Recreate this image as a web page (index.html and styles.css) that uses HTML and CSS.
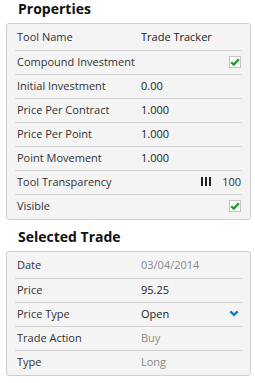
FILE: index.html
```html
<!DOCTYPE html>
<html lang="en">
<head>
    <meta charset="UTF-8">
    <title>Properties</title>
    <link rel="stylesheet" href="styles.css">
</head>
<body>
    <!-- Properties -->
    <h2 class="section-title">Properties</h2>
    <div class="panel">
        <div class="row">
            <span class="label">Tool Name</span>
            <span class="value">Trade Tracker</span>
        </div>
        <div class="row">
            <span class="label">Compound Investment</span>
            <span class="check"><svg viewBox="0 0 10 10" width="10" height="10"><path d="M1.2 5.2 L3.8 7.6 L8.8 2.2" fill="none" stroke="#1e9a1e" stroke-width="2.2"/></svg></span>
        </div>
        <div class="row">
            <span class="label">Initial Investment</span>
            <span class="value">0.00</span>
        </div>
        <div class="row">
            <span class="label">Price Per Contract</span>
            <span class="value">1.000</span>
        </div>
        <div class="row">
            <span class="label">Price Per Point</span>
            <span class="value">1.000</span>
        </div>
        <div class="row">
            <span class="label">Point Movement</span>
            <span class="value">1.000</span>
        </div>
        <div class="row">
            <span class="label">Tool Transparency</span>
            <span class="slider">
                <span class="grip"><i></i><i></i><i></i></span>
                <span class="slider-val">100</span>
            </span>
        </div>
        <div class="row">
            <span class="label">Visible</span>
            <span class="check"><svg viewBox="0 0 10 10" width="10" height="10"><path d="M1.2 5.2 L3.8 7.6 L8.8 2.2" fill="none" stroke="#1e9a1e" stroke-width="2.2"/></svg></span>
        </div>
    </div>

    <!-- Selected Trade -->
    <h2 class="section-title second">Selected Trade</h2>
    <div class="panel">
        <div class="row">
            <span class="label">Date</span>
            <span class="value muted">03/04/2014</span>
        </div>
        <div class="row">
            <span class="label">Price</span>
            <span class="value">95.25</span>
        </div>
        <div class="row">
            <span class="label">Price Type</span>
            <span class="value">Open</span>
            <span class="chevron"><svg viewBox="0 0 10 7" width="10" height="7"><path d="M1.3 1.3 L5 4.9 L8.7 1.3" fill="none" stroke="#1b7dc3" stroke-width="2.4"/></svg></span>
        </div>
        <div class="row">
            <span class="label">Trade Action</span>
            <span class="value muted">Buy</span>
        </div>
        <div class="row">
            <span class="label">Type</span>
            <span class="value muted">Long</span>
        </div>
    </div>
</body>
</html>
```

FILE: styles.css
```css
* {
    margin: 0;
    padding: 0;
    box-sizing: border-box;
}

body {
    font-family: 'Open Sans', 'DejaVu Sans', sans-serif;
    font-size: 11px;
    color: #333;
    background: #fff;
}

.section-title {
    font-size: 14px;
    font-weight: 700;
    color: #111;
    line-height: 17px;
    padding-left: 18px;
    margin-bottom: 6px;
}

.section-title.second {
    margin-top: 8px;
}

.panel {
    margin-left: 6px;
    width: 245px;
    background: #f4f4f4;
    border: 1px solid #cfcfcf;
    border-radius: 3px;
    padding: 3px 8px 1px;
}

.row {
    display: flex;
    align-items: center;
    height: 24px;
    border-bottom: 1px solid #d2d2d2;
    padding-left: 2px;
    padding-bottom: 2px;
}

.row:first-child {
    padding-bottom: 4px;
}

.row:last-child {
    height: 23px;
    border-bottom: none;
}

.label {
    width: 124px;
    flex-shrink: 0;
    color: #333;
}

.value {
    color: #222;
}

.value.muted {
    color: #8a8a8a;
}

.check {
    margin-left: auto;
    margin-right: 1px;
    width: 12px;
    height: 12px;
    background: #fff;
    border: 1px solid #c4c4c4;
    display: flex;
    align-items: center;
    justify-content: center;
}

.slider {
    margin-left: auto;
    display: flex;
    align-items: center;
    gap: 11px;
    margin-right: 1px;
}

.grip {
    display: flex;
    gap: 2px;
}

.grip i {
    display: block;
    width: 2px;
    height: 9px;
    background: #222;
}

.slider-val {
    color: #333;
}

.chevron {
    margin-left: auto;
    margin-right: 3px;
    display: flex;
}
```
